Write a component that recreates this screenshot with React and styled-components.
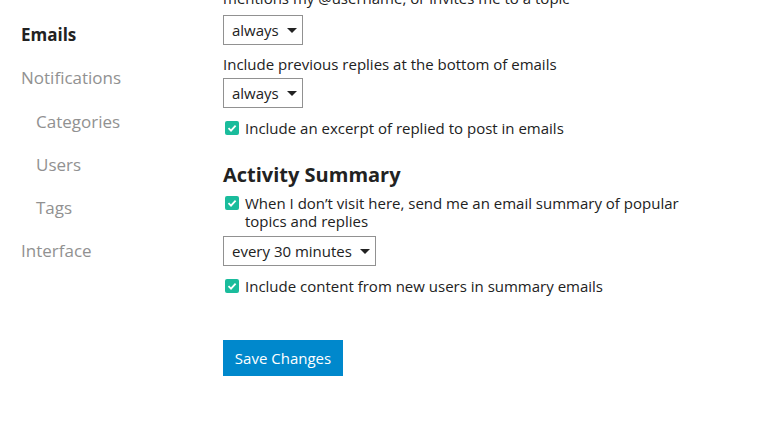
import React from "react";
import styled, { createGlobalStyle } from "styled-components";

const Global = createGlobalStyle`
  html, body { margin: 0; padding: 0; background: #fff; }
  body { font-family: "Open Sans", "Noto Sans", sans-serif; color: #222; overflow: hidden; }
  * { box-sizing: border-box; }
`;

const Page = styled.div`
  display: flex;
  width: 768px;
  height: 425px;
  overflow: hidden;
`;

const Sidebar = styled.nav`
  width: 223px;
  flex: none;
  display: flex;
  flex-direction: column;
  padding-top: 23px;
`;

const NavItem = styled.div`
  height: 43.3px;
  flex: none;
  line-height: 24px;
  font-size: 17px;
  padding-left: ${(p) => (p.$sub ? 36 : 21)}px;
  color: ${(p) => (p.$active ? "#222" : "#919191")};
  font-weight: ${(p) => (p.$active ? 700 : 400)};
`;

const Main = styled.main`
  flex: 1;
  display: flex;
  flex-direction: column;
  align-items: flex-start;
  margin-top: -12px;
`;

const Label = styled.div`
  font-size: 15px;
  line-height: 20px;
  margin-top: ${(p) => p.$mt || 0}px;
`;

const SelectBox = styled.div`
  display: flex;
  align-items: center;
  gap: 8px;
  height: 30px;
  padding: 0 5px 0 8px;
  border: 1px solid #919191;
  font-size: 15px;
  margin-top: ${(p) => p.$mt || 0}px;
  background: #fff;
`;

const Caret = styled.span`
  width: 0;
  height: 0;
  border-left: 5px solid transparent;
  border-right: 5px solid transparent;
  border-top: 5px solid #222;
`;

const CheckRow = styled.label`
  display: flex;
  align-items: flex-start;
  gap: 6px;
  font-size: 15px;
  line-height: 18px;
  padding-left: 2px;
  max-width: 480px;
  margin-top: ${(p) => p.$mt || 0}px;
`;

const Box = styled.span`
  flex: none;
  width: 14px;
  height: 14px;
  margin-top: 2px;
  border-radius: 2px;
  background: #1abc9c;
  display: flex;
  align-items: center;
  justify-content: center;
`;

const Heading = styled.h2`
  margin: ${(p) => p.$mt || 0}px 0 0;
  font-size: 20px;
  line-height: 28px;
  font-weight: 700;
`;

const Button = styled.button`
  margin-top: ${(p) => p.$mt || 0}px;
  height: 36px;
  width: 120px;
  border: none;
  background: #0088cc;
  color: #fff;
  font-family: inherit;
  font-size: 15px;
  padding: 0;
`;

const Check = ({ children, mt }) => (
  <CheckRow $mt={mt}>
    <Box>
      <svg width="10" height="10" viewBox="0 0 10 10">
        <path d="M1.5 5.2 L4 7.6 L8.6 2.6" fill="none" stroke="#fff" strokeWidth="1.8" />
      </svg>
    </Box>
    <span>{children}</span>
  </CheckRow>
);

const Select = ({ children, mt }) => (
  <SelectBox $mt={mt}>
    {children}
    <Caret />
  </SelectBox>
);

export default function App() {
  return (
    <>
      <Global />
      <Page>
        <Sidebar>
          <NavItem $active>Emails</NavItem>
          <NavItem>Notifications</NavItem>
          <NavItem $sub>Categories</NavItem>
          <NavItem $sub>Users</NavItem>
          <NavItem $sub>Tags</NavItem>
          <NavItem>Interface</NavItem>
        </Sidebar>
        <Main>
          <Label>mentions my @username, or invites me to a topic</Label>
          <Select mt={7}>always</Select>
          <Label $mt={9}>Include previous replies at the bottom of emails</Label>
          <Select mt={4}>always</Select>
          <Check mt={11}>Include an excerpt of replied to post in emails</Check>
          <Heading $mt={24}>Activity Summary</Heading>
          <Check mt={5}>When I don’t visit here, send me an email summary of popular topics and replies</Check>
          <Select mt={6}>every 30 minutes</Select>
          <Check mt={11}>Include content from new users in summary emails</Check>
          <Button $mt={45}>Save Changes</Button>
        </Main>
      </Page>
    </>
  );
}
